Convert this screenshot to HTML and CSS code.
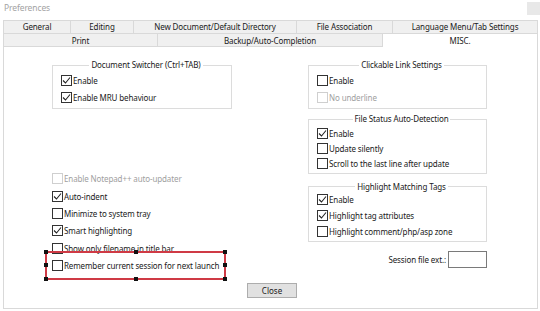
FILE: index.html
```html
<!DOCTYPE html>
<html lang="en">
<head>
    <meta charset="UTF-8">
    <title>Preferences</title>
    <link rel="stylesheet" href="styles.css">
</head>
<body>
    <div class="window">
        <div class="titlebar">
            <span class="title">Preferences</span>
            <span class="winbtn"></span>
        </div>

        <div class="tabs">
            <div class="tabrow row1">
                <div class="tab t_general">General</div>
                <div class="tab t_editing">Editing</div>
                <div class="tab t_newdoc">New Document/Default Directory</div>
                <div class="tab t_assoc">File Association</div>
                <div class="tab t_lang">Language Menu/Tab Settings</div>
            </div>
            <div class="tabrow row2">
                <div class="tab t_print">Print</div>
                <div class="tab t_backup">Backup/Auto-Completion</div>
                <div class="tab t_misc active">MISC.</div>
            </div>
        </div>

        <div class="panel">
            <div class="columns">
                <div class="col">
                    <fieldset class="group g_switcher">
                        <legend>Document Switcher (Ctrl+TAB)</legend>
                        <div class="check on"><span class="box"></span>Enable</div>
                        <div class="check on"><span class="box"></span>Enable MRU behaviour</div>
                    </fieldset>

                    <div class="list">
                        <div class="check off"><span class="box"></span>Enable Notepad++ auto-updater</div>
                        <div class="check on"><span class="box"></span>Auto-indent</div>
                        <div class="check"><span class="box"></span>Minimize to system tray</div>
                        <div class="check on"><span class="box"></span>Smart highlighting</div>
                        <div class="check"><span class="box"></span>Show only filename in title bar</div>
                        <div class="check marked">
                            <span class="box"></span>Remember current session for next launch
                            <span class="mark">
                                <i class="h tl"></i><i class="h tc"></i><i class="h tr"></i>
                                <i class="h ml"></i><i class="h mr"></i>
                                <i class="h bl"></i><i class="h bc"></i><i class="h br"></i>
                            </span>
                        </div>
                    </div>
                </div>

                <div class="col">
                    <fieldset class="group g_links">
                        <legend>Clickable Link Settings</legend>
                        <div class="check"><span class="box"></span>Enable</div>
                        <div class="check off"><span class="box"></span>No underline</div>
                    </fieldset>

                    <fieldset class="group g_status">
                        <legend>File Status Auto-Detection</legend>
                        <div class="check on"><span class="box"></span>Enable</div>
                        <div class="check"><span class="box"></span>Update silently</div>
                        <div class="check"><span class="box"></span>Scroll to the last line after update</div>
                    </fieldset>

                    <fieldset class="group g_tags">
                        <legend>Highlight Matching Tags</legend>
                        <div class="check on"><span class="box"></span>Enable</div>
                        <div class="check on"><span class="box"></span>Highlight tag attributes</div>
                        <div class="check"><span class="box"></span>Highlight comment/php/asp zone</div>
                    </fieldset>

                    <div class="session">
                        <label for="ext">Session file ext.:</label>
                        <input type="text" id="ext">
                    </div>
                </div>
            </div>

            <div class="footer">
                <button type="button" class="btn">Close</button>
            </div>
        </div>
    </div>
</body>
</html>
```

FILE: styles.css
```css
* {
    box-sizing: border-box;
}

body {
    margin: 0;
    background-color: #fff;
    font-family: "Noto Sans", "Open Sans", sans-serif;
    font-size: 8px;
    letter-spacing: -0.12px;
    color: #1a1a1a;
}

.window {
    width: 540px;
    height: 311px;
    overflow: hidden;
}

/* title bar */
.titlebar {
    display: flex;
    height: 20px;
}

.title {
    padding-left: 4px;
    line-height: 16px;
    font-size: 8.5px;
    color: #a3a3a3;
}

.winbtn {
    margin-left: auto;
    margin-top: 2px;
    width: 13px;
    height: 13px;
    background-color: #e8e8e8;
}

/* tabs */
.tabs {
    margin-left: 3px;
    width: 535px;
}

.tabrow {
    display: flex;
}

.tab {
    text-align: center;
    background-color: #f0f0f0;
    border-top: 1px solid #d9d9d9;
    border-right: 1px solid #d9d9d9;
}

.tab:first-child {
    border-left: 1px solid #d9d9d9;
}

.row1 .tab {
    height: 13px;
    line-height: 12px;
}

.row2 .tab {
    height: 14px;
    line-height: 13px;
    border-bottom: 1px solid #d9d9d9;
}

.row2 .tab.active {
    background-color: #fff;
    border-bottom: none;
}

.t_general { width: 68px; }
.t_editing { width: 63px; }
.t_newdoc { width: 163px; }
.t_assoc { width: 96px; }
.t_lang { width: 145px; }
.t_print { width: 155px; }
.t_backup { width: 225px; }
.t_misc { width: 155px; }

/* page */
.panel {
    margin-left: 3px;
    width: 535px;
    height: 262px;
    border-left: 1px solid #d9d9d9;
    border-right: 1px solid #d9d9d9;
    border-bottom: 1px solid #d9d9d9;
}

.columns {
    display: grid;
    grid-template-columns: 180px 179px;
    column-gap: 76px;
    padding: 13px 0 0 48px;
}

.col {
    display: flex;
    flex-direction: column;
}

.group {
    margin: 0;
    padding: 1.5px 0 2.5px 8px;
    border: 1px solid #dcdcdc;
    min-width: 0;
}

.group legend {
    margin: 0 auto;
    padding: 0 2px;
    line-height: 10px;
}

.g_status {
    margin-top: 5px;
    padding-top: 1.8px;
    padding-bottom: 2.2px;
}

.g_status .check {
    height: 15px;
}

.g_tags {
    margin-top: 8px;
    padding-top: 0;
    padding-bottom: 1px;
}

.g_tags .check {
    height: 16px;
}

/* checkboxes */
.check {
    position: relative;
    display: flex;
    align-items: center;
    height: 17px;
    white-space: nowrap;
}

.box {
    flex: none;
    width: 11px;
    height: 11px;
    margin-right: 1px;
    border: 1px solid #333;
    background-color: #fff;
}

.check.on .box {
    background: #fff url("data:image/svg+xml;utf8,<svg xmlns='http://www.w3.org/2000/svg' width='9' height='9' viewBox='0 0 9 9'><polyline points='1,4.5 3.5,7 8,1.5' fill='none' stroke='%23222' stroke-width='1.1'/></svg>") no-repeat center;
}

.check.off {
    color: #a0a0a0;
}

.check.off .box {
    border-color: #cfcfcf;
}

.list {
    margin-top: 61px;
}

.list .check {
    height: 17.4px;
}

/* annotation round the session row */
.mark {
    position: absolute;
    left: -7px;
    top: -6px;
    width: 181px;
    height: 29px;
    border: 2px solid #cf3a45;
}

.h {
    position: absolute;
    width: 4px;
    height: 4px;
    background-color: #111;
}

.tl, .ml, .bl { left: -3px; }
.tc, .bc { left: 86.5px; }
.tr, .mr, .br { right: -3px; }
.tl, .tc, .tr { top: -3px; }
.ml, .mr { top: 10.5px; }
.bl, .bc, .br { bottom: -3px; }

.session {
    display: flex;
    justify-content: flex-end;
    align-items: center;
    margin-top: 9px;
    height: 17px;
}

.session label {
    margin-right: 2px;
}

.session input {
    width: 39px;
    height: 17px;
    border: 1px solid #7a7a7a;
    padding: 0;
    outline: none;
}

/* bottom */
.footer {
    display: flex;
    justify-content: center;
    padding-left: 3px;
    margin-top: 9px;
}

.btn {
    width: 50px;
    height: 15px;
    padding: 0;
    font: inherit;
    color: #1a1a1a;
    background-color: #e1e1e1;
    border: 1px solid #adadad;
    border-radius: 0;
}
```
